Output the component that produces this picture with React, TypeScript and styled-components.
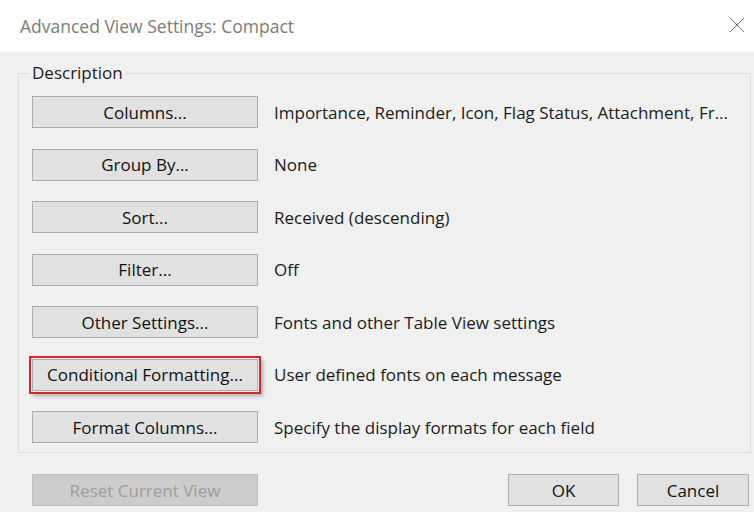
import React from 'react';
import styled, { createGlobalStyle, css } from 'styled-components';

const GlobalStyle = createGlobalStyle`
    html, body {
        margin: 0;
        padding: 0;
        background: #ffffff;
    }
    * {
        box-sizing: border-box;
    }
`;

const uiFont = `'Open Sans', 'Noto Sans', 'Liberation Sans', sans-serif`;

const Window = styled.div`
    width: 754px;
    height: 512px;
    display: flex;
    flex-direction: column;
    background: #f0f0f0;
    font-family: ${uiFont};
    font-size: 17px;
    color: #1b1b1b;
    overflow: hidden;
`;

const TitleBar = styled.div`
    height: 52px;
    flex: none;
    display: flex;
    align-items: center;
    justify-content: space-between;
    padding: 0 9px 0 20px;
    background: #ffffff;
`;

const Title = styled.span`
    font-size: 17.5px;
    color: #7b7b7b;
    padding-bottom: 1px;
`;

const CloseButton = styled.button`
    width: 16px;
    height: 16px;
    padding: 0;
    border: none;
    background: none;
    display: flex;
    align-items: center;
    justify-content: center;
    cursor: pointer;
    margin-bottom: 2px;
`;

const Content = styled.div`
    flex: 1;
    padding: 0 3px 0 18px;
`;

const GroupBox = styled.fieldset`
    margin: 11px 0 0;
    padding: 13px 0 9px 13px;
    border: 1px solid #dcdcdc;
    min-width: 0;
`;

const Legend = styled.legend`
    padding: 0 3px;
    margin-left: -3px;
    font-size: 17px;
    line-height: 20px;
    color: #1b1b1b;
`;

const SettingRows = styled.div`
    display: grid;
    grid-template-columns: 226px 1fr;
    grid-auto-rows: 32px;
    row-gap: 20.5px;
    column-gap: 16px;
    align-items: center;
`;

const PushButton = styled.button<{ $highlighted?: boolean; $width?: number }>`
    height: 32px;
    width: ${(p) => (p.$width ? `${p.$width}px` : '100%')};
    padding: 0 4px;
    border: 1px solid #adadad;
    background: #e1e1e1;
    font-family: ${uiFont};
    font-size: 17px;
    color: #111111;
    white-space: nowrap;
    cursor: pointer;

    &:disabled {
        border-color: #bfbfbf;
        background: #cccccc;
        color: #9c9c9c;
        cursor: default;
    }

    ${(p) =>
        p.$highlighted &&
        css`
            box-shadow: 0 0 0 1px #ececec, 0 0 0 3px #d3262d,
                3px 3px 4px 2px rgba(0, 0, 0, 0.28);
        `}
`;

const Summary = styled.span`
    white-space: nowrap;
    overflow: hidden;
`;

const Footer = styled.div`
    display: flex;
    align-items: center;
    margin-top: 21px;
    padding: 0 2px 0 14px;
    gap: 18px;
`;

const Spacer = styled.div`
    flex: 1;
`;

type Setting = {
    label: string;
    summary: string;
    highlighted?: boolean;
};

const settings: Setting[] = [
    { label: 'Columns...', summary: 'Importance, Reminder, Icon, Flag Status, Attachment, Fr...' },
    { label: 'Group By...', summary: 'None' },
    { label: 'Sort...', summary: 'Received (descending)' },
    { label: 'Filter...', summary: 'Off' },
    { label: 'Other Settings...', summary: 'Fonts and other Table View settings' },
    { label: 'Conditional Formatting...', summary: 'User defined fonts on each message', highlighted: true },
    { label: 'Format Columns...', summary: 'Specify the display formats for each field' },
];

function CloseIcon() {
    return (
        <svg width="16" height="16" viewBox="0 0 16 16">
            <path d="M1 1 L15 15 M15 1 L1 15" stroke="#6f6f6f" strokeWidth="1" fill="none" />
        </svg>
    );
}

export default function App() {
    return (
        <>
            <GlobalStyle />
            <Window>
                <TitleBar>
                    <Title>Advanced View Settings: Compact</Title>
                    <CloseButton aria-label="Close">
                        <CloseIcon />
                    </CloseButton>
                </TitleBar>
                <Content>
                    <GroupBox>
                        <Legend>Description</Legend>
                        <SettingRows>
                            {settings.map((s) => (
                                <React.Fragment key={s.label}>
                                    <PushButton $highlighted={s.highlighted}>{s.label}</PushButton>
                                    <Summary>{s.summary}</Summary>
                                </React.Fragment>
                            ))}
                        </SettingRows>
                    </GroupBox>
                    <Footer>
                        <PushButton $width={226} disabled>
                            Reset Current View
                        </PushButton>
                        <Spacer />
                        <PushButton $width={111}>OK</PushButton>
                        <PushButton $width={112}>Cancel</PushButton>
                    </Footer>
                </Content>
            </Window>
        </>
    );
}
